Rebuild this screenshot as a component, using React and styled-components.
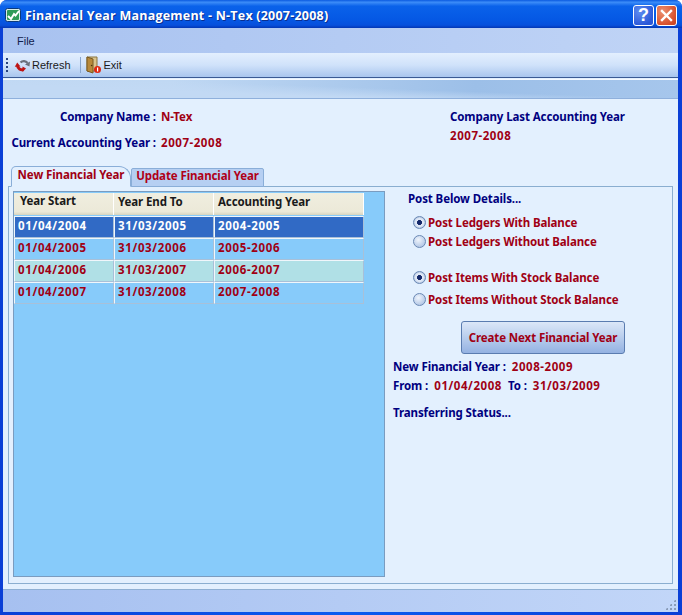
import React from "react";
import styled, { createGlobalStyle } from "styled-components";

const rows = [
  { start: "01/04/2004", end: "31/03/2005", year: "2004-2005", tone: "selected" },
  { start: "01/04/2005", end: "31/03/2006", year: "2005-2006", tone: "plain" },
  { start: "01/04/2006", end: "31/03/2007", year: "2006-2007", tone: "alt" },
  { start: "01/04/2007", end: "31/03/2008", year: "2007-2008", tone: "plain" },
];

const rowBg = { selected: "#316ac5", plain: "#87cbfa", alt: "#b0e0e6" };

const App = () => {
  return (
    <>
      <GlobalStyle />
      <Window>
        <TitleBar>
          <AppIcon />
          <TitleText>Financial Year Management - N-Tex (2007-2008)</TitleText>
          <HelpButton>?</HelpButton>
          <CloseButton>
            <svg width="13" height="13" viewBox="0 0 13 13">
              <path d="M2 2l9 9M11 2l-9 9" stroke="#fff" strokeWidth="2.4" strokeLinecap="square" />
            </svg>
          </CloseButton>
        </TitleBar>
        <Inner>
          <MenuBar>
            <MenuItem>File</MenuItem>
          </MenuBar>
          <ToolBar>
            <Grip />
            <ToolButton>
              <RefreshIcon />
              Refresh
            </ToolButton>
            <ToolSep />
            <ToolButton>
              <DoorIcon />
              <ExitLabel>Exit</ExitLabel>
            </ToolButton>
          </ToolBar>
          <Banner />
          <Content>
            <Header>
              <HeaderLeft>
                <InfoLine>
                  <InfoLabel>Company Name :</InfoLabel>
                  <Red>N-Tex</Red>
                </InfoLine>
                <InfoLine>
                  <InfoLabel>Current Accounting Year :</InfoLabel>
                  <Num>2007-2008</Num>
                </InfoLine>
              </HeaderLeft>
              <HeaderRight>
                <Blue>Company Last Accounting Year</Blue>
                <Num>2007-2008</Num>
              </HeaderRight>
            </Header>
            <Tabs>
              <Tab $active>New Financial Year</Tab>
              <Tab>Update Financial Year</Tab>
            </Tabs>
            <Panel>
              <GridBox>
                <HeadRow>
                  <HeadCell $w={100}>Year Start</HeadCell>
                  <HeadCell $w={100} $low>Year End To</HeadCell>
                  <HeadCell $w={150} $low>Accounting Year</HeadCell>
                </HeadRow>
                {rows.map((r) => (
                  <DataRow key={r.start} $tone={r.tone}>
                    <Cell $w={100}>{r.start}</Cell>
                    <Cell $w={100}>{r.end}</Cell>
                    <Cell $w={150}>{r.year}</Cell>
                  </DataRow>
                ))}
              </GridBox>
              <Side>
                <SideTitle>Post Below Details...</SideTitle>
                <RadioGroup>
                  <RadioRow $h={19}>
                    <Radio $on />
                    Post Ledgers With Balance
                  </RadioRow>
                  <RadioRow $h={19}>
                    <Radio />
                    Post Ledgers Without Balance
                  </RadioRow>
                </RadioGroup>
                <RadioGroup $top={15}>
                  <RadioRow $h={22}>
                    <Radio $on />
                    Post Items With Stock Balance
                  </RadioRow>
                  <RadioRow $h={22}>
                    <Radio />
                    Post Items Without Stock Balance
                  </RadioRow>
                </RadioGroup>
                <CreateButton>Create Next Financial Year</CreateButton>
                <ResultLine $top={3}>
                  <Blue>New Financial Year :</Blue>
                  <Num>2008-2009</Num>
                </ResultLine>
                <ResultLine>
                  <Blue>From :</Blue>
                  <Num>01/04/2008</Num>
                  <Blue>To :</Blue>
                  <Num>31/03/2009</Num>
                </ResultLine>
                <StatusText>Transferring Status...</StatusText>
              </Side>
            </Panel>
          </Content>
          <StatusBar>
            <ResizeGrip />
          </StatusBar>
        </Inner>
      </Window>
    </>
  );
};

const AppIcon = () => (
  <svg width="16" height="16" viewBox="0 0 16 16" style={{ flex: "none" }}>
    <rect x=".5" y="1.5" width="15" height="13" rx="2" fill="#d8ece8" stroke="#0c3a7c" />
    <rect x="2" y="3" width="12" height="10" rx="1" fill="#2f9a58" />
    <path d="M3 9l3 3 3-5 1.5 1.5L14 4" fill="none" stroke="#fff" strokeWidth="2" />
  </svg>
);

const RefreshIcon = () => (
  <svg width="17" height="17" viewBox="0 0 17 17" style={{ flex: "none" }}>
    <path d="M6.5 5.5A4.5 4.5 0 0 1 13.5 6" fill="none" stroke="#69707c" strokeWidth="2.2" />
    <path d="M16 4.5 15.5 9.5 11 7.5z" fill="#69707c" />
    <path d="M3.5 8.5A4.5 4.5 0 0 0 9.5 12.5" fill="none" stroke="#bd1414" strokeWidth="3" />
    <path d="M.8 9.8 3.2 5.5 6.5 9.5z" fill="#bd1414" />
    <path d="M8.5 9.5 12 11.5 8.5 15z" fill="#bd1414" />
  </svg>
);

const DoorIcon = () => (
  <svg width="16" height="18" viewBox="0 0 16 18" style={{ flex: "none" }}>
    <path d="M1 1h10v14H1z" fill="#d9c48c" stroke="#8a7440" />
    <path d="M1 1l6 2v14l-6-2z" fill="#b8893a" stroke="#7a5a20" />
    <circle cx="5.6" cy="9.5" r=".8" fill="#4a3410" />
    <circle cx="11.5" cy="13.5" r="3.5" fill="#e02810" />
    <rect x="11" y="11.5" width="1.2" height="4" fill="#fff" />
  </svg>
);

const GlobalStyle = createGlobalStyle`
  html, body {
    margin: 0;
    padding: 0;
    background: #fff;
  }
  body {
    font-family: "Noto Sans", "DejaVu Sans", sans-serif;
    font-size: 11.5px;
  }
`;

const Window = styled.div`
  width: 682px;
  height: 615px;
  box-sizing: border-box;
  display: flex;
  flex-direction: column;
  background: linear-gradient(90deg, #0a3fd6, #0b5cf0 50%, #0a3fd6);
  border-radius: 7px 7px 0 0;
  padding: 0 4px 3px 3px;
  overflow: hidden;
`;

const TitleBar = styled.div`
  height: 28px;
  flex: none;
  box-sizing: border-box;
  margin: 0 -4px 0 -3px;
  padding: 2px 5px 0;
  display: flex;
  align-items: center;
  background: linear-gradient(180deg, #0a5ae0 0%, #3c8cf8 8%, #0a62ea 22%, #0558e4 70%, #0750dc 90%, #0336b4 100%);
`;

const TitleText = styled.div`
  flex: 1;
  margin: 1px 0 0 4px;
  color: #fff;
  font-family: "Open Sans", sans-serif;
  font-size: 12.5px;
  font-weight: 700;
  letter-spacing: 0.22px;
  white-space: nowrap;
  text-shadow: 1px 1px 0 #0a2f90;
`;

const CaptionButton = styled.div`
  width: 21px;
  height: 21px;
  box-sizing: border-box;
  border: 1px solid #fff;
  border-radius: 3px;
  margin-left: 2px;
  display: flex;
  align-items: center;
  justify-content: center;
  color: #fff;
`;

const HelpButton = styled(CaptionButton)`
  background: radial-gradient(circle at 30% 30%, #5f8df0, #2a57d8 75%);
  font-family: "Liberation Sans", sans-serif;
  font-size: 18px;
  font-weight: 700;
`;

const CloseButton = styled(CaptionButton)`
  background: radial-gradient(circle at 30% 30%, #ec9070, #d8502c 70%, #c04020);
`;

const Inner = styled.div`
  flex: 1;
  min-height: 0;
  display: flex;
  flex-direction: column;
  background: #e3f0fe;
`;

const MenuBar = styled.div`
  height: 25px;
  flex: none;
  display: flex;
  align-items: center;
  background: linear-gradient(90deg, #a8c2f0, #c0d4f6);
`;

const MenuItem = styled.span`
  margin-left: 14px;
  font-family: "Liberation Sans", sans-serif;
  font-size: 11px;
  color: #10204a;
`;

const ToolBar = styled.div`
  height: 25px;
  flex: none;
  display: flex;
  align-items: center;
  box-sizing: border-box;
  border-bottom: 1px solid #3a5a94;
  background: linear-gradient(180deg, #e3effe 0%, #d0e2fa 50%, #a9c6ee 100%);
`;

const Grip = styled.div`
  width: 2px;
  height: 15px;
  margin-left: 3px;
  background: repeating-linear-gradient(180deg, #27427e 0 2px, transparent 2px 4px);
`;

const ToolButton = styled.div`
  display: flex;
  align-items: center;
  gap: 1px;
  margin-left: 6px;
  font-family: "Liberation Sans", sans-serif;
  font-size: 11px;
  color: #1a1a1a;
`;

const ExitLabel = styled.span`
  margin-left: 1px;
`;

const ToolSep = styled.div`
  width: 1px;
  height: 16px;
  margin-left: 9px;
  margin-right: -1px;
  background: #8aa6cc;
`;

const Banner = styled.div`
  height: 20px;
  flex: none;
  margin-top: 1px;
  box-sizing: border-box;
  border-top: 1px solid #f4f9ff;
  border-bottom: 1px solid #8fb0dc;
  background:
    linear-gradient(182deg, transparent 45%, #c2d9f4 70%),
    linear-gradient(90deg, #c0d8f3 0%, #c0d8f3 25%, #9cbfe8 70%, #a6c6ec 100%);
`;

const Content = styled.div`
  flex: 1;
  min-height: 0;
  display: flex;
  flex-direction: column;
  padding: 0 5px 5px 5px;
  font-weight: 700;
  letter-spacing: -0.1px;
`;

const Blue = styled.span`
  color: #000080;
`;

const Red = styled.span`
  color: #a00014;
`;

// dates and years run wider in the reference than the label text
const Num = styled(Red)`
  letter-spacing: 0.55px;
`;

const Header = styled.div`
  height: 66px;
  flex: none;
  display: flex;
`;

const HeaderLeft = styled.div`
  width: 442px;
  flex: none;
  padding-top: 11px;
  display: flex;
  flex-direction: column;
  gap: 13px;
`;

const InfoLine = styled.div`
  height: 13px;
  line-height: 13px;
  display: flex;
  gap: 5px;
  padding-left: 2px;
  white-space: nowrap;
`;

const InfoLabel = styled(Blue)`
  width: 146px;
  text-align: right;
`;

const HeaderRight = styled.div`
  padding-top: 11px;
  display: flex;
  flex-direction: column;
  gap: 6px;
  line-height: 13px;
  white-space: nowrap;
`;

const Tabs = styled.div`
  height: 22px;
  flex: none;
  padding-left: 3px;
  display: flex;
  align-items: flex-end;
  position: relative;
  z-index: 1;
  margin-bottom: -1px;
`;

const Tab = styled.div`
  box-sizing: border-box;
  color: ${(p) => (p.$active ? "#a00014" : "#b00018")};
  background: ${(p) => (p.$active ? "#e3f0fe" : "#b6cff2")};
  border: 1px solid #8aaed8;
  border-bottom: ${(p) => (p.$active ? "1px solid #e3f0fe" : "1px solid #8aaed8")};
  border-radius: ${(p) => (p.$active ? "5px 12px 0 0" : "2px 2px 0 0")};
  height: ${(p) => (p.$active ? "21px" : "19px")};
  line-height: ${(p) => (p.$active ? "16px" : "14px")};
  width: ${(p) => (p.$active ? "120px" : "133px")};
  text-align: center;
  white-space: nowrap;
`;

const Panel = styled.div`
  flex: 1;
  min-height: 0;
  box-sizing: border-box;
  border: 1px solid #8aaed0;
  padding: 4px 4px 6px;
  display: flex;
`;

const GridBox = styled.div`
  width: 372px;
  flex: none;
  box-sizing: border-box;
  border: 1px solid #7a9cc0;
  background: #87cbfa;
  padding-top: 1px;
`;

const HeadRow = styled.div`
  display: flex;
  width: 350px;
  height: 22px;
  margin-bottom: 1px;
`;

const HeadCell = styled.div`
  width: ${(p) => p.$w}px;
  box-sizing: border-box;
  background: linear-gradient(180deg, #f0eee0, #ece9d8 85%, #d8d4c0);
  border-right: 1px solid #fff;
  color: #1a1a1a;
  padding-left: ${(p) => (p.$low ? "4px" : "6px")};
  line-height: ${(p) => (p.$low ? "18px" : "16px")};
  white-space: nowrap;
`;

const DataRow = styled.div`
  display: flex;
  width: 350px;
  height: 22px;
  color: ${(p) => (p.$tone === "selected" ? "#fff" : "#a00014")};
  background: ${(p) => rowBg[p.$tone]};
`;

const Cell = styled.div`
  width: ${(p) => p.$w}px;
  box-sizing: border-box;
  border: 1px solid #a8c0d8;
  border-top-color: #f0f6fb;
  border-left-color: #f0f6fb;
  padding-left: 3px;
  line-height: 18px;
  letter-spacing: 0.65px;
  white-space: nowrap;
`;

const Side = styled.div`
  flex: 1;
  padding-left: 8px;
  display: flex;
  flex-direction: column;
  color: #a00014;
`;

const SideTitle = styled(Blue)`
  margin-left: 15px;
  height: 14px;
  line-height: 14px;
  margin-top: 1px;
`;

const RadioGroup = styled.div`
  margin-top: ${(p) => (p.$top ? p.$top : 7)}px;
  padding-left: 20px;
`;

const RadioRow = styled.div`
  height: ${(p) => p.$h}px;
  display: flex;
  align-items: center;
  gap: 2px;
  white-space: nowrap;
`;

const Radio = styled.span`
  width: 13px;
  height: 13px;
  flex: none;
  box-sizing: border-box;
  border-radius: 50%;
  border: 1px solid #6a88b4;
  background: ${(p) =>
    p.$on
      ? "radial-gradient(circle, #14286a 0 2.2px, #dfe8f6 2.8px 4px, #a9bedd 6px)"
      : "radial-gradient(circle at 40% 35%, #f0f5fc, #b4c8e6 75%)"};
`;

const CreateButton = styled.div`
  width: 164px;
  height: 33px;
  margin: 11px 0 0 68px;
  box-sizing: border-box;
  border: 1px solid #5a7cb0;
  border-radius: 3px;
  display: flex;
  align-items: center;
  justify-content: center;
  color: #a00014;
  white-space: nowrap;
  background: linear-gradient(180deg, #dbe7f8 0%, #bcd0ee 45%, #94b2e2 100%);
`;

const ResultLine = styled.div`
  height: 19px;
  margin-top: ${(p) => p.$top || 0}px;
  line-height: 19px;
  display: flex;
  gap: 6px;
  white-space: nowrap;
`;

const StatusText = styled(Blue)`
  margin-top: 11px;
  line-height: 13px;
`;

const StatusBar = styled.div`
  height: 23px;
  flex: none;
  box-sizing: border-box;
  border-top: 1px solid #8fb0d4;
  display: flex;
  justify-content: flex-end;
  align-items: flex-end;
  background: linear-gradient(90deg, #a6c0f0, #c2d6f8);
`;

const ResizeGrip = styled.div`
  width: 11px;
  height: 11px;
  margin: 0 2px 2px 0;
  background-image: radial-gradient(circle, #8a9cb8 0.9px, transparent 1px);
  background-size: 4px 4px;
  clip-path: polygon(100% 0, 100% 100%, 0 100%);
`;

export default App;
